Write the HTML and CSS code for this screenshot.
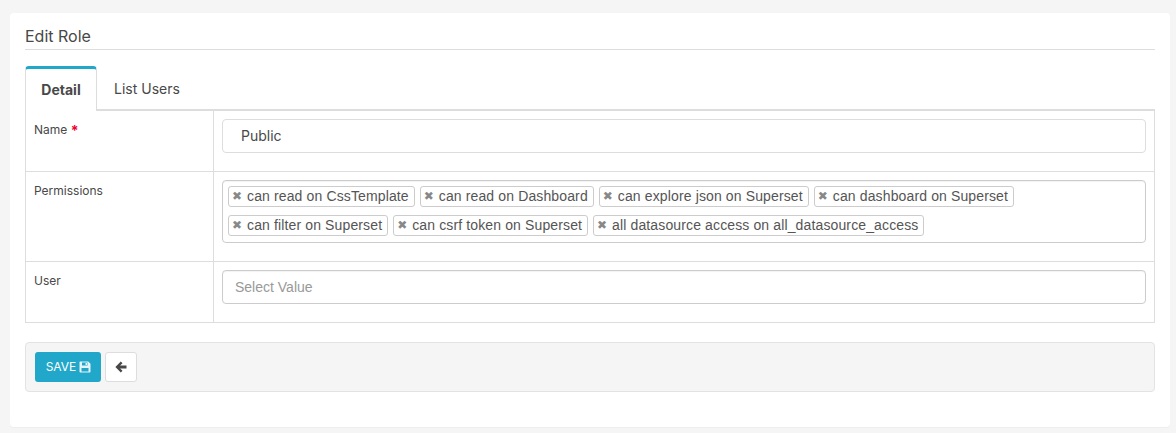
FILE: index.html
```html
<!DOCTYPE html>
<html lang="en">
<head>
    <meta charset="UTF-8">
    <title>Edit Role</title>
    <link rel="stylesheet" href="styles.css">
</head>
<body>
    <div class="card">
        <div class="card-title">Edit Role</div>

        <div class="tabs">
            <div class="tab active">Detail</div>
            <div class="tab">List Users</div>
        </div>

        <div class="form-table">
            <div class="row row-name">
                <div class="label">Name <span class="required">*</span></div>
                <div class="field">
                    <div class="input input-name">Public</div>
                </div>
            </div>
            <div class="row row-perms">
                <div class="label">Permissions</div>
                <div class="field">
                    <div class="input tags">
                        <span class="tag"><span class="tag-x">&#10006;</span>can read on CssTemplate</span>
                        <span class="tag"><span class="tag-x">&#10006;</span>can read on Dashboard</span>
                        <span class="tag"><span class="tag-x">&#10006;</span>can explore json on Superset</span>
                        <span class="tag"><span class="tag-x">&#10006;</span>can dashboard on Superset</span>
                        <span class="tag"><span class="tag-x">&#10006;</span>can filter on Superset</span>
                        <span class="tag"><span class="tag-x">&#10006;</span>can csrf token on Superset</span>
                        <span class="tag"><span class="tag-x">&#10006;</span>all datasource access on all_datasource_access</span>
                    </div>
                </div>
            </div>
            <div class="row row-user">
                <div class="label">User</div>
                <div class="field">
                    <div class="input input-select">Select Value</div>
                </div>
            </div>
        </div>

        <div class="actions">
            <div class="btn btn-save">SAVE
                <svg class="save-icon" viewBox="0 0 12 12" width="12" height="12">
                    <path fill="#e4f4f8" fill-rule="evenodd" d="M1 0.5h8.2L11.5 2.8V10.5a1 1 0 0 1-1 1H1.5a1 1 0 0 1-1-1V1a.5.5 0 0 1 .5-.5zM3 1.5V4.5H8.5V1.5zM6.5 2H8V4H6.5zM2.5 7V10.5H9.5V7z"/>
                </svg>
            </div>
            <div class="btn btn-back">
                <svg viewBox="0 0 12 12" width="12" height="12">
                    <path fill="#484848" d="M5.8.6 7.5 2.3 5.1 4.6H11.5V7.4H5.1L7.5 9.7 5.8 11.4.4 6z"/>
                </svg>
            </div>
        </div>
    </div>
</body>
</html>
```

FILE: styles.css
```css
body {
    margin: 0;
    padding: 13px 6px 6px 10px;
    background-color: #f5f5f5;
    font-family: Inter, "Liberation Sans", sans-serif;
    color: #484848;
}
.card {
    height: 414px;
    box-sizing: border-box;
    padding: 0 15px;
    background-color: #fff;
    border-radius: 4px;
    box-shadow: 0 1px 1px rgba(0, 0, 0, 0.03);
}

.card-title {
    height: 37px;
    box-sizing: border-box;
    padding-top: 14px;
    font-size: 16px;
    line-height: 19px;
    border-bottom: 1px solid #ddd;
}

.tabs {
    display: flex;
    margin-top: 16px;
    height: 45px;
    box-sizing: border-box;
    border-bottom: 2px solid #ddd;
}
.tab {
    padding: 0 16px 0 17px;
    font-size: 14px;
    line-height: 46px;
}
.tab.active {
    width: 72px;
    height: 45px;
    box-sizing: border-box;
    padding: 0;
    text-align: center;
    font-weight: 700;
    line-height: 42px;
    background-color: #fff;
    border: 1px solid #ddd;
    border-top: 3px solid #20a7c9;
    border-bottom: 0;
    border-radius: 4px 4px 0 0;
}

.form-table {
    border: 1px solid #ddd;
    border-top: 0;
}
.row {
    display: flex;
    box-sizing: border-box;
    border-bottom: 1px solid #ddd;
}
.row:last-child {
    border-bottom: 0;
}
.row-name { height: 61px; }
.row-perms { height: 90px; }
.row-user { height: 60px; }
.label {
    width: 188px;
    flex-shrink: 0;
    box-sizing: border-box;
    padding: 11px 0 0 8px;
    font-size: 12px;
    line-height: 15px;
    border-right: 1px solid #ddd;
}
.required {
    color: #f00032;
    font-size: 14px;
    font-weight: 700;
    line-height: 14px;
    vertical-align: -2px;
}
.field {
    flex: 1;
    padding: 8px 8px 0;
}
.input {
    box-sizing: border-box;
    background-color: #fff;
    border: 1px solid #ddd;
    border-radius: 4px;
    font-size: 14px;
}
.input-name {
    height: 34px;
    padding-left: 18px;
    line-height: 32px;
}
.tags {
    display: flex;
    flex-wrap: wrap;
    align-content: flex-start;
    gap: 8px 5px;
    height: 63px;
    padding: 5px;
    font-family: "Liberation Sans", Arial, sans-serif;
    letter-spacing: 0.13px;
    color: #555;
    border-color: #ccc;
    box-shadow: inset 0 1px 1px rgba(0, 0, 0, 0.05);
}
.tag {
    display: flex;
    align-items: center;
    height: 21px;
    box-sizing: border-box;
    padding: 0 5px 0 3px;
    line-height: 19px;
    border: 1px solid #ccc;
    border-radius: 3px;
}
.tag-x {
    width: 10px;
    margin-right: 5px;
    text-align: center;
    font-family: "DejaVu Sans", sans-serif;
    font-size: 12px;
    font-weight: 700;
    color: #888;
}
.input-select {
    height: 34px;
    padding-left: 12px;
    line-height: 32px;
    font-family: "Liberation Sans", Arial, sans-serif;
    color: #999;
    border-color: #ccc;
    box-shadow: inset 0 1px 1px rgba(0, 0, 0, 0.05);
}

.actions {
    display: flex;
    align-items: flex-start;
    gap: 4px;
    height: 50px;
    box-sizing: border-box;
    margin-top: 19px;
    padding: 9px;
    background-color: #f5f5f5;
    border: 1px solid #e3e3e3;
    border-radius: 4px;
}
.btn {
    display: flex;
    align-items: center;
    justify-content: center;
    height: 30px;
    box-sizing: border-box;
    border-radius: 3px;
}
.btn-save {
    width: 66px;
    gap: 3px;
    font-size: 12px;
    line-height: 28px;
    padding: 1px 0 1px 1px;
    color: #fff;
    background-color: #20a7c9;
}
.btn-back {
    width: 32px;
    background-color: #fff;
    border: 1px solid #ddd;
}
```
